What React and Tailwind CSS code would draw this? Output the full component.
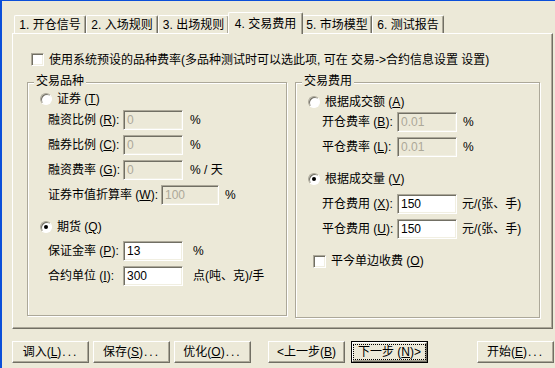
const font = "font-['Liberation_Sans','Noto_Sans_CJK_SC',sans-serif]";

const Key = ({ k }) => (
  <span>
    {" ("}
    <span className="underline underline-offset-1">{k}</span>
    {")"}
  </span>
);

const Dots = () => <span className="tracking-[2px] ml-[1px]">...</span>;

const Check = () => (
  <div className="w-[13px] h-[13px] shrink-0 bg-white border border-t-[#ACA899] border-l-[#ACA899] border-r-white border-b-white shadow-[inset_1px_1px_0_#716F64,inset_-1px_-1px_0_#F1EFE2]" />
);

const Radio = ({ on }) => (
  <div className="w-[12px] h-[12px] shrink-0 rounded-full bg-white border border-t-[#ACA899] border-l-[#ACA899] border-r-white border-b-white shadow-[inset_1px_1px_0_#716F64] flex items-center justify-center">
    {on && <div className="w-[4px] h-[4px] rounded-full bg-black" />}
  </div>
);

const Input = ({ value, disabled, w = "w-[60px]" }) => (
  <div
    className={`${w} h-[20px] shrink-0 border border-t-[#ACA899] border-l-[#ACA899] border-r-white border-b-white shadow-[inset_1px_1px_0_#716F64,inset_-1px_-1px_0_#F1EFE2] pl-[3px] pt-[1px] text-[12px] leading-[16px] ${
      disabled ? "bg-[#ECE9D8] text-[#ACA899]" : "bg-white text-black"
    }`}
  >
    {value}
  </div>
);

const Row = ({ label, k, value, disabled, unit, lw, iw, ul, mt, pl }) => (
  <div className={`flex items-center h-[20px] ${mt} ${pl}`}>
    <div className={`${lw} shrink-0 whitespace-nowrap`}>
      {label}
      <Key k={k} />:
    </div>
    <Input value={value} disabled={disabled} w={iw} />
    <div className={`${ul} whitespace-nowrap`}>{unit}</div>
  </div>
);

const Btn = ({ children, ml, def }) => (
  <div className={`${ml} ${def ? "border border-black" : ""}`}>
    <div
      className={`${def ? "w-[75px] h-[20px]" : "w-[77px] h-[22px]"} border border-t-white border-l-white border-r-[#716F64] border-b-[#716F64] shadow-[inset_-1px_-1px_0_#ACA899] flex items-center justify-center whitespace-nowrap`}
    >
      {def ? (
        <span className="border border-dotted border-black px-[4px] leading-[14px]">{children}</span>
      ) : (
        children
      )}
    </div>
  </div>
);

const tabs = [
  { t: "1. 开仓信号", w: "w-[72px]" },
  { t: "2. 入场规则", w: "w-[72px]" },
  { t: "3. 出场规则", w: "w-[71px]" },
  { t: "4. 交易费用", w: "w-[75px]", on: true },
  { t: "5. 市场模型", w: "w-[70px]" },
  { t: "6. 测试报告", w: "w-[72px]" },
];

export default function App() {
  return (
    <div
      className={`${font} w-[555px] h-[368px] overflow-hidden bg-[#ECE9D8] border-t-[1px] border-l-[2px] border-[#0B4FD9] pt-[10px] pl-[10px] text-[12px] text-black flex flex-col`}
    >
      {/* tab strip */}
      <div className="flex items-end ml-[2px] h-[22px]">
        {tabs.map((tab) => (
          <div
            key={tab.t}
            className={`${tab.w} ${
              tab.on ? "h-[22px] -mb-[1px] relative z-10 -mx-[1px]" : "h-[18px]"
            } shrink-0 bg-[#ECE9D8] border-t border-l border-t-white border-l-white border-r border-r-[#716F64] rounded-t-[2px] shadow-[inset_-1px_0_0_#ACA899] flex items-center justify-center whitespace-nowrap leading-[14px]`}
          >
            {tab.t}
          </div>
        ))}
      </div>

      {/* tab panel */}
      <div className="w-[541px] h-[296px] shrink-0 border border-t-white border-l-white border-r-[#716F64] border-b-[#716F64] shadow-[inset_-1px_-1px_0_#ACA899] flex flex-col">
        <div className="flex items-center gap-[5px] mt-[19px] ml-[18px] h-[13px] whitespace-nowrap">
          <Check />
          <span>使用系统预设的品种费率(多品种测试时可以选此项, 可在 交易-&gt;合约信息设置 设置)</span>
        </div>

        <div className="flex items-start gap-[8px] mt-[16px] ml-[14px]">
          {/* 交易品种 */}
          <div className="relative w-[260px] h-[234px] border border-[#ACA899] shadow-[inset_1px_1px_0_#fff,1px_1px_0_#fff] flex flex-col">
            <span className="absolute -top-[10px] left-[6px] px-[2px] bg-[#ECE9D8] leading-[16px]">交易品种</span>
            <div className="flex items-center gap-[5px] h-[20px] mt-[6px] pl-[12px]">
              <Radio />
              <span>
                证券<Key k="T" />
              </span>
            </div>
            <Row label="融资比例" k="R" value="0" disabled unit="%" lw="w-[75px]" iw="w-[60px]" ul="ml-[7px]" mt="mt-[1px]" pl="pl-[20px]" />
            <Row label="融券比例" k="C" value="0" disabled unit="%" lw="w-[75px]" iw="w-[60px]" ul="ml-[7px]" mt="mt-[5px]" pl="pl-[20px]" />
            <Row label="融资费率" k="G" value="0" disabled unit="% / 天" lw="w-[75px]" iw="w-[60px]" ul="ml-[7px]" mt="mt-[5px]" pl="pl-[20px]" />
            <Row label="证券市值折算率" k="W" value="100" disabled unit="%" lw="w-[113px]" iw="w-[58px]" ul="ml-[6px]" mt="mt-[5px]" pl="pl-[20px]" />
            <div className="flex items-center gap-[5px] h-[20px] mt-[12px] pl-[12px]">
              <Radio on />
              <span>
                期货<Key k="Q" />
              </span>
            </div>
            <Row label="保证金率" k="P" value="13" unit="%" lw="w-[75px]" iw="w-[60px]" ul="ml-[10px]" mt="mt-[4px]" pl="pl-[20px]" />
            <Row label="合约单位" k="I" value="300" unit="点(吨、克)/手" lw="w-[75px]" iw="w-[60px]" ul="ml-[10px]" mt="mt-[5px]" pl="pl-[20px]" />
          </div>

          {/* 交易费用 */}
          <div className="relative w-[245px] h-[236px] border border-[#ACA899] shadow-[inset_1px_1px_0_#fff,1px_1px_0_#fff] flex flex-col">
            <span className="absolute -top-[10px] left-[6px] px-[2px] bg-[#ECE9D8] leading-[16px]">交易费用</span>
            <div className="flex items-center gap-[5px] h-[20px] mt-[9px] pl-[12px]">
              <Radio />
              <span>
                根据成交额<Key k="A" />
              </span>
            </div>
            <Row label="开仓费率" k="B" value="0.01" disabled unit="%" lw="w-[75px]" iw="w-[60px]" ul="ml-[6px]" mt="mt-[0px]" pl="pl-[26px]" />
            <Row label="平仓费率" k="L" value="0.01" disabled unit="%" lw="w-[75px]" iw="w-[60px]" ul="ml-[6px]" mt="mt-[5px]" pl="pl-[26px]" />
            <div className="flex items-center gap-[5px] h-[20px] mt-[12px] pl-[12px]">
              <Radio on />
              <span>
                根据成交量<Key k="V" />
              </span>
            </div>
            <Row label="开仓费用" k="X" value="150" unit="元/(张、手)" lw="w-[75px]" iw="w-[60px]" ul="ml-[5px]" mt="mt-[5px]" pl="pl-[26px]" />
            <Row label="平仓费用" k="U" value="150" unit="元/(张、手)" lw="w-[75px]" iw="w-[60px]" ul="ml-[5px]" mt="mt-[5px]" pl="pl-[26px]" />
            <div className="flex items-center gap-[5px] h-[20px] mt-[12px] pl-[17px]">
              <Check />
              <span>
                平今单边收费<Key k="O" />
              </span>
            </div>
          </div>
        </div>
      </div>

      {/* buttons */}
      <div className="flex items-center mt-[12px]">
        <Btn ml="ml-0">调入<Key k="L" /><Dots /></Btn>
        <Btn ml="ml-[4px]">保存<Key k="S" /><Dots /></Btn>
        <Btn ml="ml-[4px]">优化<Key k="O" /><Dots /></Btn>
        <Btn ml="ml-[17px]">&lt;上一步<Key k="B" /></Btn>
        <Btn ml="ml-[6px]" def>下一步<Key k="N" />&gt;</Btn>
        <Btn ml="ml-[49px]">开始<Key k="E" /><Dots /></Btn>
      </div>
    </div>
  );
}
